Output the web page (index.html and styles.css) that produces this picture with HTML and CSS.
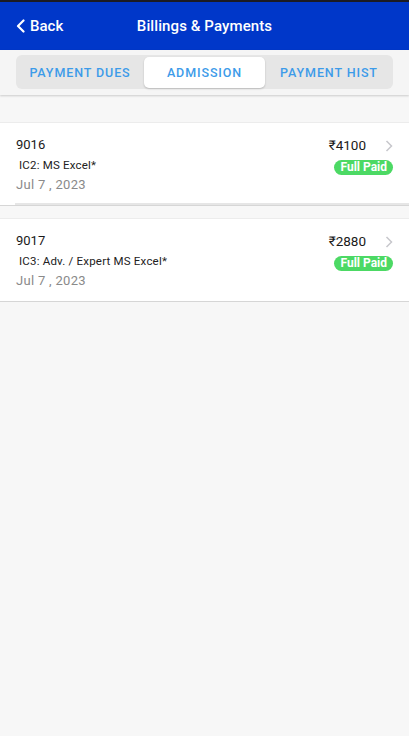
FILE: index.html
```html
<!DOCTYPE html>
<html lang="en">
<head>
    <meta charset="UTF-8">
    <meta name="viewport" content="width=device-width, initial-scale=1.0">
    <title>Billings &amp; Payments</title>
    <link rel="stylesheet" href="styles.css">
</head>
<body>
    <div class="status"></div>
    <header class="topbar">
        <a class="back" href="#">
            <svg width="9" height="14" viewBox="0 0 9 14"><path d="M7.5 1.5 2 7l5.5 5.5" fill="none" stroke="#fff" stroke-width="2.2" stroke-linecap="round" stroke-linejoin="round"/></svg>
            <span>Back</span>
        </a>
        <h1>Billings &amp; Payments</h1>
    </header>

    <div class="tabs-wrap">
        <div class="tabs">
            <button class="tab">PAYMENT DUES</button>
            <button class="tab active">ADMISSION</button>
            <button class="tab">PAYMENT HIST</button>
        </div>
    </div>

    <div class="list">
        <div class="item first">
            <div class="item-left">
                <div class="num">9016</div>
                <div class="course">IC2: MS Excel*</div>
                <div class="date">Jul 7 , 2023</div>
            </div>
            <div class="item-right">
                <div class="amount-row">
                    <span class="amount">₹4100</span>
                    <svg class="chev" width="8" height="12" viewBox="0 0 8 12"><path d="M1.5 1 6.5 6l-5 5" fill="none" stroke="#c7c7cc" stroke-width="1.5"/></svg>
                </div>
                <span class="badge">Full Paid</span>
            </div>
        </div>

        <div class="item">
            <div class="item-left">
                <div class="num">9017</div>
                <div class="course">IC3: Adv. / Expert MS Excel*</div>
                <div class="date">Jul 7 , 2023</div>
            </div>
            <div class="item-right">
                <div class="amount-row">
                    <span class="amount">₹2880</span>
                    <svg class="chev" width="8" height="12" viewBox="0 0 8 12"><path d="M1.5 1 6.5 6l-5 5" fill="none" stroke="#c7c7cc" stroke-width="1.5"/></svg>
                </div>
                <span class="badge">Full Paid</span>
            </div>
        </div>
    </div>
</body>
</html>
```

FILE: styles.css
```css
/* Basic styling */
* { box-sizing: border-box; margin: 0; padding: 0; }
body { font-family: Roboto, "Liberation Sans", sans-serif; background-color: #f7f7f7; color: #222; min-height: 100vh; }

.status { height: 2px; background-color: #1b1b24; }
.topbar { height: 48px; background-color: #0037c9; display: flex; align-items: center; justify-content: center; position: relative; }
.topbar h1 { font-size: 15px; font-weight: 500; color: #fff; letter-spacing: 0.1px; }
.back { position: absolute; left: 16px; top: 0; height: 48px; display: flex; align-items: center; gap: 5px; color: #fff; text-decoration: none; font-size: 15px; font-weight: 500; }

.tabs-wrap { background-color: #f5f5f5; padding: 5px 16px 6px; box-shadow: 0 1px 2px rgba(0, 0, 0, 0.18); position: relative; }
.tabs { display: grid; grid-template-columns: 128fr 121fr 128fr; background-color: #e6e6e6; border-radius: 6px; height: 34px; padding: 2px 0 1px; }
.tab { border: none; background: none; font-family: inherit; font-size: 12.5px; font-weight: 500; letter-spacing: 0.9px; color: #3d9be9; cursor: pointer; border-radius: 5px; }
.tab.active { background-color: #fff; box-shadow: 0 1px 2px rgba(0, 0, 0, 0.2); }

.list { padding-top: 27px; }
.item { display: flex; justify-content: space-between; background-color: #fff; border-top: 1px solid #ececec; border-bottom: 1px solid #d6d6d6; padding: 14px 16px 0 16px; height: 84px; margin-bottom: 12px; position: relative; }
.item.first::after { content: ""; position: absolute; left: 15px; right: 0; bottom: 0; height: 2px; background-color: #e6e6e6; }
.num { font-size: 13px; line-height: 16px; color: #1a1a1a; }
.course { font-size: 11.5px; line-height: 14px; margin-top: 5px; padding-left: 3px; color: #222; letter-spacing: 0.2px; }
.date { font-size: 13px; line-height: 16px; margin-top: 5px; color: #8a8a8a; letter-spacing: 0.3px; }

.item-right { display: flex; flex-direction: column; align-items: flex-end; }
.amount-row { display: flex; align-items: center; gap: 19px; height: 16px; }
.amount { font-size: 13.5px; color: #1a1a1a; }
.chev { margin-top: 1px; }
.badge { margin-top: 7px; background-color: #4cd964; color: #fff; font-size: 12px; font-weight: 700; line-height: 15px; padding: 0 6px; border-radius: 8px; }
```
